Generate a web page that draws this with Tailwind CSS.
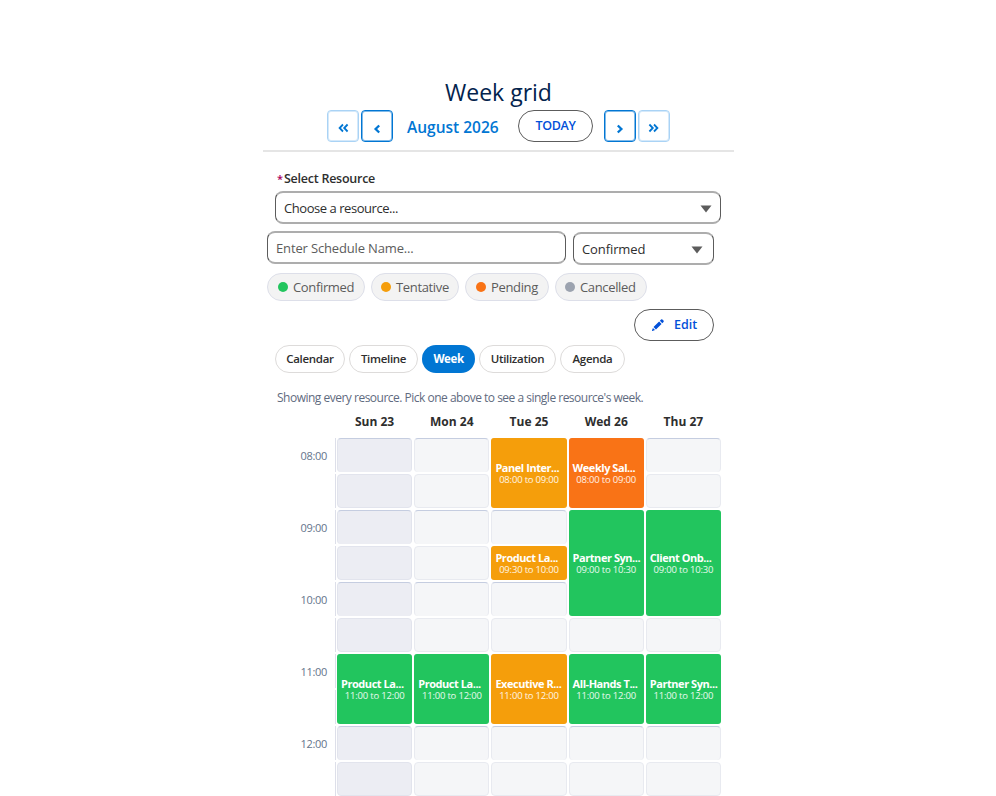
<!DOCTYPE html>
<html lang="en">
<head>
<meta charset="utf-8">
<title>Week grid</title>
<script src="https://cdn.jsdelivr.net/npm/@tailwindcss/browser@4"></script>
</head>
<body class="h-[796px] overflow-hidden bg-white font-['Open_Sans','Noto_Sans',sans-serif] text-[13px] text-[#2e2e2e]">
<main class="ml-[263px] w-[471px] pt-[76px]">
  <header class="flex h-[76px] flex-col items-center border-b-2 border-[#e5e5e5]">
    <h1 class="h-[34px] text-[23px] leading-[32px] tracking-[0px] text-[#03234d] whitespace-nowrap">Week grid</h1>
    <div class="flex h-8 w-[343px] items-center text-[#0176d3]">
      <button class="flex size-8 items-center justify-center rounded border border-[#aad3f5] pt-[3px] shadow-[inset_0_0_0_1px_#d5e9fa]" aria-label="Previous month"><svg width="12" height="10" viewBox="0 0 12 10" fill="none" stroke="currentColor" stroke-width="1.8"><path d="M6 1.500 2.600 5 6 8.500M10.600 1.500 7.200 5l3.400 3.500"/></svg></button>
      <button class="ml-0.5 flex size-8 items-center justify-center rounded border border-[#0176d3] pt-1.5 shadow-[inset_0_0_0_1px_#80bae9]" aria-label="Previous week"><svg width="8" height="10" viewBox="0 0 8 10" fill="none" stroke="currentColor" stroke-width="2.300"><path d="M6.200 1.500 2.600 5l3.600 3.500"/></svg></button>
      <span class="ml-3.5 w-[112px] whitespace-nowrap pt-0.5 text-[15.5px] font-semibold leading-[34px] tracking-[0px]">August 2026</span>
      <button class="-ml-px h-8 w-[75px] rounded-full border border-[#5c5c5c] pt-px text-[12.5px] font-semibold tracking-[-0.35px] text-[#0250d9]">TODAY</button>
      <button class="ml-[11px] flex size-8 items-center justify-center rounded border border-[#0176d3] pt-1.5 shadow-[inset_0_0_0_1px_#80bae9]" aria-label="Next week"><svg width="8" height="10" viewBox="0 0 8 10" fill="none" stroke="currentColor" stroke-width="2.300"><path d="M1.800 1.500 5.400 5 1.800 8.500"/></svg></button>
      <button class="ml-0.5 flex size-8 items-center justify-center rounded border border-[#aad3f5] pt-[3px] shadow-[inset_0_0_0_1px_#d5e9fa]" aria-label="Next month"><svg width="12" height="10" viewBox="0 0 12 10" fill="none" stroke="currentColor" stroke-width="1.800"><path d="M1.400 1.500 4.800 5 1.400 8.500M6 1.500 9.400 5 6 8.500"/></svg></button>
    </div>
  </header>

  <section class="px-3 pt-4">
    <label class="flex h-[23px] items-center gap-0.5 pl-0.5 text-[12.5px] font-semibold tracking-[-0.25px] whitespace-nowrap"><span class="w-[5px] text-[11px] text-[#a8005c]">*</span><span>Select Resource</span></label>
    <div class="flex h-[33px] w-[446px] items-center justify-between rounded-lg border border-y-2 border-[#5c5c5c] border-y-[#adadad] pl-2 pr-2 pt-0.5 tracking-[-0.45px]"><span>Choose a resource...</span><svg width="12" height="8" viewBox="0 0 12 8"><path d="M.5.500h11L6 7.500z" fill="#5c5c5c"/></svg></div>
  </section>

  <div class="ml-1 mt-[7px] flex h-[34px] gap-2">
    <div class="flex h-[33px] w-[299px] items-center rounded-lg border border-y-2 border-[#5c5c5c] border-y-[#adadad] pl-2 pt-0.5 tracking-[-0.15px] text-[#5c5c5c]">Enter Schedule Name...</div>
    <div class="-ml-px mt-px flex h-[33px] w-[141px] items-center justify-between rounded-lg border border-y-2 border-[#5c5c5c] border-y-[#adadad] pl-2 pr-2.5 pt-0.5 tracking-[-0.1px]"><span>Confirmed</span><svg width="12" height="8" viewBox="0 0 12 8"><path d="M.5.500h11L6 7.500z" fill="#5c5c5c"/></svg></div>
  </div>

  <div class="ml-1 mt-2 flex h-7 gap-1.5 tracking-[-0.35px] text-[#5c5c5c]">
    <span class="flex w-[98px] items-center gap-[5px] rounded-[14px] border border-[#dddfe9] bg-[#f3f3f3] pl-2.5"><i class="size-2.5 rounded-full bg-[#22c55e]"></i><span class="pt-0.5">Confirmed</span></span>
    <span class="flex w-[88px] items-center gap-[5px] rounded-[14px] border border-[#dddfe9] bg-[#f3f3f3] pl-[9px]"><i class="size-2.5 rounded-full bg-[#f59e0b]"></i><span class="pt-0.5">Tentative</span></span>
    <span class="flex w-[84px] items-center gap-[5px] rounded-[14px] border border-[#dddfe9] bg-[#f3f3f3] pl-2.5"><i class="size-2.5 rounded-full bg-[#f97316]"></i><span class="pt-0.5">Pending</span></span>
    <span class="flex w-[92px] items-center gap-[5px] rounded-[14px] border border-[#dddfe9] bg-[#f3f3f3] pl-[9px]"><i class="size-2.5 rounded-full bg-[#9ca3af]"></i><span class="pt-0.5">Cancelled</span></span>
  </div>

  <div class="mr-5 mt-2 flex justify-end">
    <button class="flex h-8 w-[80px] items-center gap-[9px] rounded-full border border-[#5c5c5c] pl-4 text-[12.5px] font-semibold text-[#0250d9]"><svg width="14" height="14" viewBox="-.5 -.5 15 15" fill="currentColor"><path d="m2.200 9.200 6-6 2.600 2.600-6 6zM9 2.400l1.300-1.300q.7-.7 1.400 0l1.200 1.200q.7.700 0 1.400L11.600 5zM1.600 10.200 3.800 12.400l-2.700.9q-.7.100-.5-.6z"/></svg><span class="pt-px">Edit</span></button>
  </div>

  <nav class="ml-3 mt-1 flex h-7 gap-1 text-[11.5px] font-semibold tracking-[-0.3px]">
    <button class="w-[70px] rounded-full border border-[#dddbda]">Calendar</button>
    <button class="w-[69px] rounded-full border border-[#dddbda]">Timeline</button>
    <button class="w-[53px] rounded-full bg-[#0176d3] font-bold tracking-[-0.4px] text-white">Week</button>
    <button class="w-[77px] rounded-full border border-[#dddbda]">Utilization</button>
    <button class="w-[65px] rounded-full border border-[#dddbda]">Agenda</button>
  </nav>

  <p class="ml-3.5 mt-4 h-[18px] whitespace-nowrap text-[12px] leading-[18px] tracking-[-0.5px] text-[#5f6b80]">Showing every resource. Pick one above to see a single resource's week.</p>

  <div class="ml-[74px] mt-1 grid h-[22px] w-[384px] grid-cols-5 gap-x-0.5 text-center text-[12px] font-bold leading-[22px]">
    <span>Sun 23</span><span>Mon 24</span><span>Tue 25</span><span>Wed 26</span><span>Thu 27</span>
  </div>
  <div class="ml-3 mt-[5px] flex gap-px">
    <div id="times" class="grid w-[61px] auto-rows-[34px] gap-y-0.5 text-right text-[11px] tracking-[-0.3px] text-[#64748b]"></div>
    <div id="grid" class="grid w-[384px] auto-rows-[34px] grid-cols-5 gap-0.5"></div>
  </div>
</main>
<script>
const times = document.getElementById('times');
const grid = document.getElementById('grid');
for (let r = 0; r < 10; r++) {
  const t = document.createElement('div');
  t.className = 'border-r border-[#dddfe9] pr-2 leading-[36px]';
  if (r % 2 === 0) t.textContent = String(8 + r / 2).padStart(2, '0') + ':00';
  times.append(t);
  for (let c = 0; c < 5; c++) {
    const d = document.createElement('div');
    d.className = (c === 0 ? 'bg-[#ecedf3] border-[#e2e4ed]' : 'bg-[#f5f6f8] border-[#e8eaf0]') +
      (r % 2 === 0 ? ' rounded border-x border-t border-t-[#c5cde0]' : ' rounded border');
    d.style.gridArea = `${r + 1} / ${c + 1}`;
    grid.append(d);
  }
}
const colors = { confirmed: 'bg-[#22c55e]', tentative: 'bg-[#f59e0b]', pending: 'bg-[#f97316]' };
// row, column, half-hour slots, status, title, hours
const events = [
  [1, 3, 2, 'tentative', 'Panel Inter...', '08:00 to 09:00'],
  [1, 4, 2, 'pending', 'Weekly Sal...', '08:00 to 09:00'],
  [3, 4, 3, 'confirmed', 'Partner Syn...', '09:00 to 10:30'],
  [3, 5, 3, 'confirmed', 'Client Onb...', '09:00 to 10:30'],
  [4, 3, 1, 'tentative', 'Product La...', '09:30 to 10:00'],
  [7, 1, 2, 'confirmed', 'Product La...', '11:00 to 12:00'],
  [7, 2, 2, 'confirmed', 'Product La...', '11:00 to 12:00'],
  [7, 3, 2, 'tentative', 'Executive R...', '11:00 to 12:00'],
  [7, 4, 2, 'confirmed', 'All-Hands T...', '11:00 to 12:00'],
  [7, 5, 2, 'confirmed', 'Partner Syn...', '11:00 to 12:00'],
];
for (const [row, col, span, status, title, hours] of events) {
  const e = document.createElement('div');
  e.className = 'z-10 flex min-w-0 flex-col justify-center rounded-[3px] px-1 pt-px text-white ' + colors[status];
  e.style.gridArea = `${row} / ${col} / span ${span}`;
  e.innerHTML = `<b class="block whitespace-nowrap text-[11px] font-bold leading-3 tracking-[-0.45px]">${title}</b><span class="block whitespace-nowrap text-center text-[9.5px] leading-[11px] tracking-[-0.2px] text-white/90">${hours}</span>`;
  grid.append(e);
}
</script>
</body>
</html>
